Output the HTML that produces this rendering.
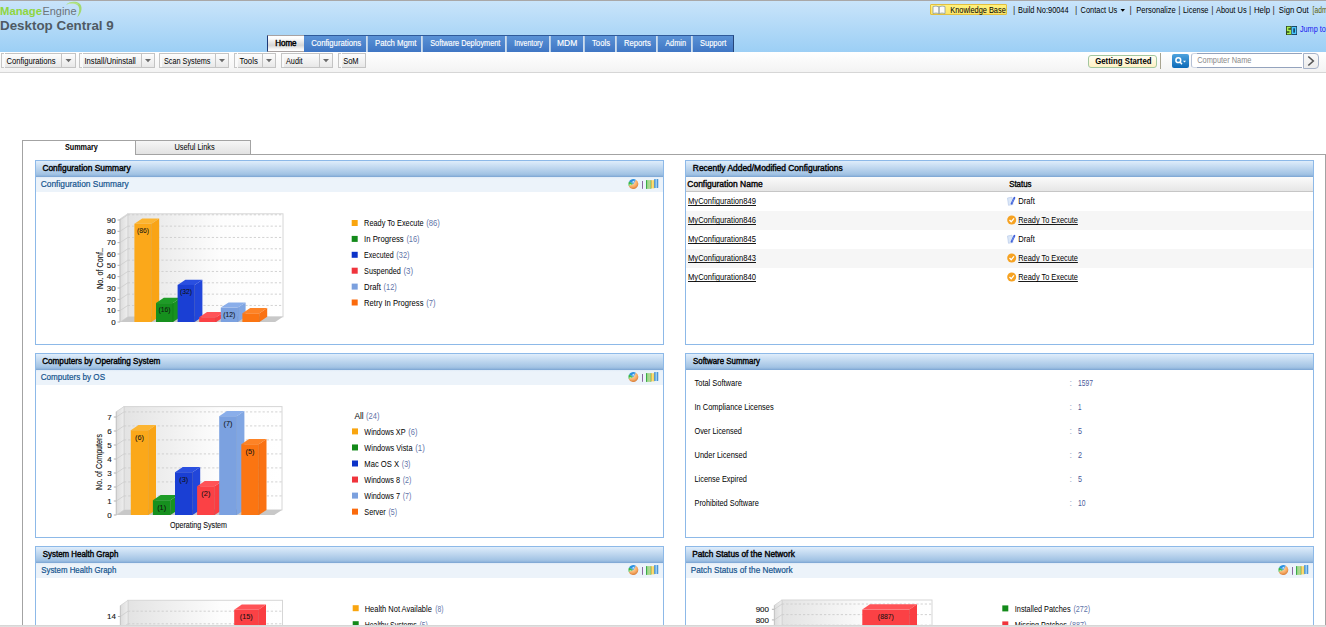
<!DOCTYPE html>
<html><head><meta charset="utf-8">
<style>
*{box-sizing:border-box;margin:0;padding:0}
html,body{width:1326px;height:627px;overflow:hidden;background:#fff;font-family:"Liberation Sans",sans-serif;font-size:8px;color:#000}
.abs{position:absolute}
#hdr{position:absolute;left:0;top:0;width:1326px;height:52px;background:linear-gradient(#c9e4fa,#9ccff5);border-top:1px solid #a9a7a7}
.tab{position:absolute;top:35px;height:17px;background:linear-gradient(#5a92d6,#3f76c4);border-top:1px solid #2f5a9a}
.tsep{position:absolute;top:36px;width:2px;height:16px;background:linear-gradient(90deg,#d8e6f4,#a8c2e0)}
#toolbar{position:absolute;left:0;top:52px;width:1326px;height:21px;background:linear-gradient(#ffffff,#f3f3f3);border-bottom:1px solid #d6d6d6}
.grip{position:absolute;top:53px;width:3px;height:15px;border:1px solid #c6c6c6;border-right:none;background:#fafafa}
.btn{position:absolute;top:53px;height:15px;border:1px solid #c4c4c4;border-left:none;background:linear-gradient(#fdfdfd,#e8e8e8)}
.dd{position:absolute;top:-1px;height:15px;border-left:1px solid #c4c4c4}
.dd:after{content:"";position:absolute;left:4px;top:5px;border-left:3px solid transparent;border-right:3px solid transparent;border-top:3px solid #666}
.panel{position:absolute;border:1px solid #8db9e8;background:#fff}
.ph{position:absolute;left:0;top:0;right:0;height:16px;background:linear-gradient(#dfedfb,#a2c3e4 88%,#8db2da);border-bottom:1px solid #82aad6}
.psh{position:absolute;left:0;top:16px;right:0;height:15px;background:linear-gradient(#e0ebf7,#ecf3fa 12%,#ecf3fa)}
.lsq{position:absolute;width:6px;height:6px}
</style></head><body>
<div id="hdr"></div>
<!-- logo swoosh -->
<svg class="abs" style="left:60px;top:0" width="26" height="20"><path d="M6 4.8 C9 1.8 15 0.8 19 3.2 C22.8 5.6 22.5 12.5 17.2 17.2 C19.6 12.2 20.2 6.8 17 4.8 C14 3 9.5 3.2 6 4.8 Z" fill="#9ed860" opacity="0.9"/><path d="M8 4 C12 2.4 16 2.6 18.4 4.4" fill="none" stroke="#d8f4b0" stroke-width="0.6" opacity="0.8"/></svg>
<!-- knowledge base box -->
<div class="abs" style="left:930px;top:4px;width:77px;height:11px;background:linear-gradient(#fff27e,#fbe46a);border:1px solid #e3bf3e;border-radius:1px"></div>
<svg class="abs" style="left:932px;top:5px" width="15" height="10"><path d="M1 1.5 Q4 0.5 7 1.8 L7 8.5 Q4 7.5 1 8.5 Z M7 1.8 Q10 0.5 13 1.5 L13 8.5 Q10 7.5 7 8.5 Z" fill="#fafafa" stroke="#8a9aa0" stroke-width="0.8"/></svg>
<!-- jump to icon -->
<svg class="abs" style="left:1286px;top:26px" width="11" height="9"><rect x="0" y="0" width="5.5" height="9" fill="#2d4a1c"/><rect x="5.5" y="0" width="5.5" height="9" fill="#173a58"/><path d="M4.6 1.6 H1.6 V4.5 H4.2 V7.4 H1" fill="none" stroke="#a8f050" stroke-width="1.5"/><rect x="6.6" y="1.6" width="3" height="5.8" fill="none" stroke="#48c8ff" stroke-width="1.4"/></svg>
<!-- nav tabs -->
<div class="abs" style="left:267px;top:35px;width:37px;height:17px;background:linear-gradient(#ffffff 0%,#fdfdfd 15%,#d6d6d6 62%,#f4f4f4 85%,#ffffff 100%);border-left:1px solid #1d3a78;border-top:1px solid #a8a2a2;border-bottom:1px solid #a8a2a2"></div>
<div class="tab" style="left:304px;width:430px;border-right:1px solid #25457a"></div>
<div class="tsep" style="left:366px"></div>
<div class="tsep" style="left:421px"></div>
<div class="tsep" style="left:505px"></div>
<div class="tsep" style="left:549px"></div>
<div class="tsep" style="left:583px"></div>
<div class="tsep" style="left:615px"></div>
<div class="tsep" style="left:656px"></div>
<div class="tsep" style="left:691px"></div>
<!-- toolbar -->
<div id="toolbar"></div>
<div class="grip" style="left:1px"></div>
<div class="btn" style="left:5px;width:71px"></div>
<div class="abs" style="left:61px;top:53px;width:1px;height:15px;background:#c4c4c4"></div>
<svg class="abs" style="left:61px;top:53px" width="14" height="15"><path d="M4.5 6 L10.5 6 L7.5 9.3 Z" fill="#6a6a6a"/></svg>
<div class="grip" style="left:79px"></div>
<div class="btn" style="left:83px;width:72px"></div>
<div class="abs" style="left:141px;top:53px;width:1px;height:15px;background:#c4c4c4"></div>
<svg class="abs" style="left:141px;top:53px" width="13" height="15"><path d="M4.0 6 L10.0 6 L7.0 9.3 Z" fill="#6a6a6a"/></svg>
<div class="grip" style="left:159px"></div>
<div class="btn" style="left:162px;width:67px"></div>
<div class="abs" style="left:215px;top:53px;width:1px;height:15px;background:#c4c4c4"></div>
<svg class="abs" style="left:215px;top:53px" width="13" height="15"><path d="M4.0 6 L10.0 6 L7.0 9.3 Z" fill="#6a6a6a"/></svg>
<div class="grip" style="left:234px"></div>
<div class="btn" style="left:238px;width:38px"></div>
<div class="abs" style="left:262px;top:53px;width:1px;height:15px;background:#c4c4c4"></div>
<svg class="abs" style="left:262px;top:53px" width="13" height="15"><path d="M4.0 6 L10.0 6 L7.0 9.3 Z" fill="#6a6a6a"/></svg>
<div class="grip" style="left:281px"></div>
<div class="btn" style="left:284px;width:49px"></div>
<div class="abs" style="left:319px;top:53px;width:1px;height:15px;background:#c4c4c4"></div>
<svg class="abs" style="left:319px;top:53px" width="13" height="15"><path d="M4.0 6 L10.0 6 L7.0 9.3 Z" fill="#6a6a6a"/></svg>
<div class="grip" style="left:338px"></div>
<div class="btn" style="left:342px;width:24px"></div>
<!-- right toolbar -->
<div class="abs" style="left:1088px;top:55px;width:69px;height:13px;border:1px solid #a3c7a0;border-radius:3px;background:linear-gradient(#fffdf2,#fff1c4)"></div>
<div class="abs" style="left:1160px;top:53px;width:1px;height:16px;background:#a8a490"></div>
<div class="abs" style="left:1172px;top:54px;width:17px;height:14px;border-radius:2px;background:linear-gradient(#4ea3de,#0b69b7)"></div>
<svg class="abs" style="left:1172px;top:54px" width="17" height="14"><circle cx="6.3" cy="6.2" r="2.4" fill="none" stroke="#fff" stroke-width="1.5"/><line x1="8" y1="8" x2="10" y2="10.3" stroke="#fff" stroke-width="1.5"/><path d="M11 6.8 L14 6.8 L12.5 8.5 Z" fill="#fff"/></svg>
<div class="abs" style="left:1192px;top:53px;width:111px;height:15px;background:#fff"></div><div class="abs" style="left:1191px;top:53px;width:6px;height:15px;border-top:1px solid #d0d8e4;border-bottom:1px solid #d0d8e4;border-left:1px solid #b4c0d4;border-radius:3px 0 0 3px"></div><div class="abs" style="left:1197px;top:53px;width:105px;height:1px;background:#94a3bd"></div><div class="abs" style="left:1197px;top:67px;width:105px;height:1px;background:#94a3bd"></div>
<div class="abs" style="left:1303px;top:53px;width:16px;height:16px;background:linear-gradient(#fafafa,#ececec);border:1px solid #a6b2c8;border-radius:0 4px 4px 0"></div>
<svg class="abs" style="left:1303px;top:53px" width="16" height="16"><path d="M5.3 3.5 L10.3 8 L5.3 12.5" fill="none" stroke="#555" stroke-width="1.6"/></svg>
<!-- sub tabs -->
<div class="abs" style="left:22px;top:140px;width:1304px;height:500px;border-left:1px solid #a3a3a3;border-top:1px solid #a3a3a3;border-right:1px solid #a3a3a3"></div>
<div class="abs" style="left:23px;top:141px;width:112px;height:14px;background:#fff"></div>
<div class="abs" style="left:135px;top:140px;width:116px;height:15px;background:linear-gradient(#f6f6f6,#e2e2e2);border:1px solid #a3a3a3"></div>
<div class="abs" style="left:251px;top:140px;width:1075px;height:14px;background:#fff"></div>
<div class="abs" style="left:251px;top:154px;width:1074px;height:1px;background:#a3a3a3"></div>
<!-- panels -->
<div class="panel" style="left:35px;top:160px;width:629px;height:185px"><div class="ph"></div><div class="psh"></div></div>
<div class="panel" style="left:685px;top:160px;width:629px;height:185px"><div class="ph"></div>
  <div class="abs" style="left:0;top:16px;width:627px;height:15px;background:linear-gradient(#fbfbfb,#e6e6e6);border-bottom:1px solid #c6c6c6"></div>
  <div class="abs" style="left:0;top:50px;width:627px;height:19px;background:#f6f6f6"></div>
  <div class="abs" style="left:0;top:88px;width:627px;height:19px;background:#f6f6f6"></div>
</div>
<div class="panel" style="left:35px;top:353px;width:629px;height:185px"><div class="ph"></div><div class="psh"></div></div>
<div class="panel" style="left:685px;top:353px;width:629px;height:185px"><div class="ph"></div></div>
<div class="panel" style="left:35px;top:546px;width:629px;height:185px"><div class="ph"></div><div class="psh"></div></div>
<div class="panel" style="left:685px;top:546px;width:629px;height:185px"><div class="ph"></div><div class="psh"></div></div>
<svg class="abs" style="left:627px;top:178px" width="34" height="13"><defs><radialGradient id="po" cx="0.4" cy="0.3" r="0.8"><stop offset="0" stop-color="#ffe0b8"/><stop offset="0.6" stop-color="#f6a860"/><stop offset="1" stop-color="#c86a28"/></radialGradient><linearGradient id="gg" x1="0" x2="1"><stop offset="0" stop-color="#0a9a2a"/><stop offset="0.3" stop-color="#a0d488"/><stop offset="0.8" stop-color="#b0dc98"/><stop offset="1" stop-color="#58b050"/></linearGradient><linearGradient id="gy" x1="0" x2="1"><stop offset="0" stop-color="#d8a020"/><stop offset="0.5" stop-color="#ffec90"/><stop offset="1" stop-color="#f0c020"/></linearGradient><linearGradient id="gb" x1="0" x2="1"><stop offset="0" stop-color="#1a70c8"/><stop offset="0.5" stop-color="#a8dcfa"/><stop offset="1" stop-color="#1a6cc0"/></linearGradient></defs><path d="M6.3 6 L8.80 1.67 A5 5 0 1 1 1.60 7.71 Z" fill="url(#po)"/><path d="M6.3 6 L1.60 7.71 A5 5 0 0 1 2.06 3.35 Z" fill="#3cb848"/><path d="M6.3 6 L2.06 3.35 A5 5 0 0 1 8.80 1.67 Z" fill="#2a90e0"/><path d="M4.5 4.2 L7.5 2.2 L7 4.8 Z" fill="#d8f0ff" opacity="0.9"/><path d="M2 6.5 L4.8 5.6 L3.2 8 Z" fill="#c0f0a0" opacity="0.9"/><rect x="15" y="3" width="1" height="7.8" fill="#8a6aa0"/><rect x="19" y="2.1" width="5.2" height="8.8" fill="url(#gg)"/><rect x="24.2" y="2.2" width="3.2" height="8.2" fill="url(#gy)"/><rect x="27.3" y="1" width="3.9" height="9" fill="url(#gb)" rx="0.5"/></svg><svg class="abs" style="left:627px;top:371px" width="34" height="13"><defs><radialGradient id="po" cx="0.4" cy="0.3" r="0.8"><stop offset="0" stop-color="#ffe0b8"/><stop offset="0.6" stop-color="#f6a860"/><stop offset="1" stop-color="#c86a28"/></radialGradient><linearGradient id="gg" x1="0" x2="1"><stop offset="0" stop-color="#0a9a2a"/><stop offset="0.3" stop-color="#a0d488"/><stop offset="0.8" stop-color="#b0dc98"/><stop offset="1" stop-color="#58b050"/></linearGradient><linearGradient id="gy" x1="0" x2="1"><stop offset="0" stop-color="#d8a020"/><stop offset="0.5" stop-color="#ffec90"/><stop offset="1" stop-color="#f0c020"/></linearGradient><linearGradient id="gb" x1="0" x2="1"><stop offset="0" stop-color="#1a70c8"/><stop offset="0.5" stop-color="#a8dcfa"/><stop offset="1" stop-color="#1a6cc0"/></linearGradient></defs><path d="M6.3 6 L8.80 1.67 A5 5 0 1 1 1.60 7.71 Z" fill="url(#po)"/><path d="M6.3 6 L1.60 7.71 A5 5 0 0 1 2.06 3.35 Z" fill="#3cb848"/><path d="M6.3 6 L2.06 3.35 A5 5 0 0 1 8.80 1.67 Z" fill="#2a90e0"/><path d="M4.5 4.2 L7.5 2.2 L7 4.8 Z" fill="#d8f0ff" opacity="0.9"/><path d="M2 6.5 L4.8 5.6 L3.2 8 Z" fill="#c0f0a0" opacity="0.9"/><rect x="15" y="3" width="1" height="7.8" fill="#8a6aa0"/><rect x="19" y="2.1" width="5.2" height="8.8" fill="url(#gg)"/><rect x="24.2" y="2.2" width="3.2" height="8.2" fill="url(#gy)"/><rect x="27.3" y="1" width="3.9" height="9" fill="url(#gb)" rx="0.5"/></svg><svg class="abs" style="left:627px;top:564px" width="34" height="13"><defs><radialGradient id="po" cx="0.4" cy="0.3" r="0.8"><stop offset="0" stop-color="#ffe0b8"/><stop offset="0.6" stop-color="#f6a860"/><stop offset="1" stop-color="#c86a28"/></radialGradient><linearGradient id="gg" x1="0" x2="1"><stop offset="0" stop-color="#0a9a2a"/><stop offset="0.3" stop-color="#a0d488"/><stop offset="0.8" stop-color="#b0dc98"/><stop offset="1" stop-color="#58b050"/></linearGradient><linearGradient id="gy" x1="0" x2="1"><stop offset="0" stop-color="#d8a020"/><stop offset="0.5" stop-color="#ffec90"/><stop offset="1" stop-color="#f0c020"/></linearGradient><linearGradient id="gb" x1="0" x2="1"><stop offset="0" stop-color="#1a70c8"/><stop offset="0.5" stop-color="#a8dcfa"/><stop offset="1" stop-color="#1a6cc0"/></linearGradient></defs><path d="M6.3 6 L8.80 1.67 A5 5 0 1 1 1.60 7.71 Z" fill="url(#po)"/><path d="M6.3 6 L1.60 7.71 A5 5 0 0 1 2.06 3.35 Z" fill="#3cb848"/><path d="M6.3 6 L2.06 3.35 A5 5 0 0 1 8.80 1.67 Z" fill="#2a90e0"/><path d="M4.5 4.2 L7.5 2.2 L7 4.8 Z" fill="#d8f0ff" opacity="0.9"/><path d="M2 6.5 L4.8 5.6 L3.2 8 Z" fill="#c0f0a0" opacity="0.9"/><rect x="15" y="3" width="1" height="7.8" fill="#8a6aa0"/><rect x="19" y="2.1" width="5.2" height="8.8" fill="url(#gg)"/><rect x="24.2" y="2.2" width="3.2" height="8.2" fill="url(#gy)"/><rect x="27.3" y="1" width="3.9" height="9" fill="url(#gb)" rx="0.5"/></svg><svg class="abs" style="left:1277px;top:564px" width="34" height="13"><defs><radialGradient id="po" cx="0.4" cy="0.3" r="0.8"><stop offset="0" stop-color="#ffe0b8"/><stop offset="0.6" stop-color="#f6a860"/><stop offset="1" stop-color="#c86a28"/></radialGradient><linearGradient id="gg" x1="0" x2="1"><stop offset="0" stop-color="#0a9a2a"/><stop offset="0.3" stop-color="#a0d488"/><stop offset="0.8" stop-color="#b0dc98"/><stop offset="1" stop-color="#58b050"/></linearGradient><linearGradient id="gy" x1="0" x2="1"><stop offset="0" stop-color="#d8a020"/><stop offset="0.5" stop-color="#ffec90"/><stop offset="1" stop-color="#f0c020"/></linearGradient><linearGradient id="gb" x1="0" x2="1"><stop offset="0" stop-color="#1a70c8"/><stop offset="0.5" stop-color="#a8dcfa"/><stop offset="1" stop-color="#1a6cc0"/></linearGradient></defs><path d="M6.3 6 L8.80 1.67 A5 5 0 1 1 1.60 7.71 Z" fill="url(#po)"/><path d="M6.3 6 L1.60 7.71 A5 5 0 0 1 2.06 3.35 Z" fill="#3cb848"/><path d="M6.3 6 L2.06 3.35 A5 5 0 0 1 8.80 1.67 Z" fill="#2a90e0"/><path d="M4.5 4.2 L7.5 2.2 L7 4.8 Z" fill="#d8f0ff" opacity="0.9"/><path d="M2 6.5 L4.8 5.6 L3.2 8 Z" fill="#c0f0a0" opacity="0.9"/><rect x="15" y="3" width="1" height="7.8" fill="#8a6aa0"/><rect x="19" y="2.1" width="5.2" height="8.8" fill="url(#gg)"/><rect x="24.2" y="2.2" width="3.2" height="8.2" fill="url(#gy)"/><rect x="27.3" y="1" width="3.9" height="9" fill="url(#gb)" rx="0.5"/></svg><svg class="abs" style="left:1007px;top:196.3px" width="9" height="10"><path d="M0.5 2 L5 1.2 L6 8.5 L1.5 9.3 Z" fill="#dce8f8" stroke="#b0c4e8" stroke-width="0.6"/><path d="M4.6 7.6 L7.4 1.8" stroke="#3a5ad8" stroke-width="1.9" stroke-linecap="round"/><path d="M4.8 7.2 L7 2.6" stroke="#8aa8f0" stroke-width="0.6"/></svg><svg class="abs" style="left:1007px;top:214.8px" width="10" height="10"><circle cx="4.7" cy="5" r="4.5" fill="#f6a221"/><path d="M2.5 5 L4.2 6.8 L7 3.4" fill="none" stroke="#fff" stroke-width="1.3"/></svg><svg class="abs" style="left:1007px;top:234.3px" width="9" height="10"><path d="M0.5 2 L5 1.2 L6 8.5 L1.5 9.3 Z" fill="#dce8f8" stroke="#b0c4e8" stroke-width="0.6"/><path d="M4.6 7.6 L7.4 1.8" stroke="#3a5ad8" stroke-width="1.9" stroke-linecap="round"/><path d="M4.8 7.2 L7 2.6" stroke="#8aa8f0" stroke-width="0.6"/></svg><svg class="abs" style="left:1007px;top:252.8px" width="10" height="10"><circle cx="4.7" cy="5" r="4.5" fill="#f6a221"/><path d="M2.5 5 L4.2 6.8 L7 3.4" fill="none" stroke="#fff" stroke-width="1.3"/></svg><svg class="abs" style="left:1007px;top:271.8px" width="10" height="10"><circle cx="4.7" cy="5" r="4.5" fill="#f6a221"/><path d="M2.5 5 L4.2 6.8 L7 3.4" fill="none" stroke="#fff" stroke-width="1.3"/></svg>
<svg class="abs" style="left:0;top:0" width="1326" height="627" font-family="Liberation Sans, sans-serif"><defs><linearGradient id="bw1" x1="0" x2="1" y1="0" y2="0"><stop offset="0" stop-color="#e3e3e3"/><stop offset="0.6" stop-color="#fdfdfd"/><stop offset="1" stop-color="#ffffff"/></linearGradient><linearGradient id="lw1" x1="0" x2="1" y1="0" y2="0"><stop offset="0" stop-color="#dcdcdc"/><stop offset="1" stop-color="#eeeeee"/></linearGradient></defs><rect x="127.8" y="213.8" width="155.2" height="103.0" fill="url(#bw1)" stroke="#d6d6d6" stroke-width="1"/><polygon points="120,219 127.8,213.8 127.8,316.8 120,322" fill="url(#lw1)" stroke="#d2d2d2" stroke-width="0.8"/><polygon points="120,322 127.8,316.8 283,316.8 275.2,322" fill="#c8c8c8"/><line x1="117.5" y1="322.0" x2="120" y2="322.0" stroke="#a0a0a0" stroke-width="0.8"/><text x="115.6" y="324.7" text-anchor="end" font-size="8" fill="#151515" stroke="#151515" stroke-width="0.12">0</text><line x1="127.8" y1="305.4666666666667" x2="283" y2="305.4666666666667" stroke="#cdcdcd" stroke-width="0.9" stroke-dasharray="2.2,2"/><line x1="120" y1="310.6666666666667" x2="127.8" y2="305.4666666666667" stroke="#cccccc" stroke-width="0.8"/><line x1="117.5" y1="310.6666666666667" x2="120" y2="310.6666666666667" stroke="#a0a0a0" stroke-width="0.8"/><text x="115.6" y="313.3666666666667" text-anchor="end" font-size="8" fill="#151515" stroke="#151515" stroke-width="0.12">10</text><line x1="127.8" y1="294.1333333333333" x2="283" y2="294.1333333333333" stroke="#cdcdcd" stroke-width="0.9" stroke-dasharray="2.2,2"/><line x1="120" y1="299.3333333333333" x2="127.8" y2="294.1333333333333" stroke="#cccccc" stroke-width="0.8"/><line x1="117.5" y1="299.3333333333333" x2="120" y2="299.3333333333333" stroke="#a0a0a0" stroke-width="0.8"/><text x="115.6" y="302.0333333333333" text-anchor="end" font-size="8" fill="#151515" stroke="#151515" stroke-width="0.12">20</text><line x1="127.8" y1="282.8" x2="283" y2="282.8" stroke="#cdcdcd" stroke-width="0.9" stroke-dasharray="2.2,2"/><line x1="120" y1="288.0" x2="127.8" y2="282.8" stroke="#cccccc" stroke-width="0.8"/><line x1="117.5" y1="288.0" x2="120" y2="288.0" stroke="#a0a0a0" stroke-width="0.8"/><text x="115.6" y="290.7" text-anchor="end" font-size="8" fill="#151515" stroke="#151515" stroke-width="0.12">30</text><line x1="127.8" y1="271.4666666666667" x2="283" y2="271.4666666666667" stroke="#cdcdcd" stroke-width="0.9" stroke-dasharray="2.2,2"/><line x1="120" y1="276.6666666666667" x2="127.8" y2="271.4666666666667" stroke="#cccccc" stroke-width="0.8"/><line x1="117.5" y1="276.6666666666667" x2="120" y2="276.6666666666667" stroke="#a0a0a0" stroke-width="0.8"/><text x="115.6" y="279.3666666666667" text-anchor="end" font-size="8" fill="#151515" stroke="#151515" stroke-width="0.12">40</text><line x1="127.8" y1="260.1333333333333" x2="283" y2="260.1333333333333" stroke="#cdcdcd" stroke-width="0.9" stroke-dasharray="2.2,2"/><line x1="120" y1="265.3333333333333" x2="127.8" y2="260.1333333333333" stroke="#cccccc" stroke-width="0.8"/><line x1="117.5" y1="265.3333333333333" x2="120" y2="265.3333333333333" stroke="#a0a0a0" stroke-width="0.8"/><text x="115.6" y="268.0333333333333" text-anchor="end" font-size="8" fill="#151515" stroke="#151515" stroke-width="0.12">50</text><line x1="127.8" y1="248.8" x2="283" y2="248.8" stroke="#cdcdcd" stroke-width="0.9" stroke-dasharray="2.2,2"/><line x1="120" y1="254.0" x2="127.8" y2="248.8" stroke="#cccccc" stroke-width="0.8"/><line x1="117.5" y1="254.0" x2="120" y2="254.0" stroke="#a0a0a0" stroke-width="0.8"/><text x="115.6" y="256.7" text-anchor="end" font-size="8" fill="#151515" stroke="#151515" stroke-width="0.12">60</text><line x1="127.8" y1="237.4666666666667" x2="283" y2="237.4666666666667" stroke="#cdcdcd" stroke-width="0.9" stroke-dasharray="2.2,2"/><line x1="120" y1="242.66666666666669" x2="127.8" y2="237.4666666666667" stroke="#cccccc" stroke-width="0.8"/><line x1="117.5" y1="242.66666666666669" x2="120" y2="242.66666666666669" stroke="#a0a0a0" stroke-width="0.8"/><text x="115.6" y="245.36666666666667" text-anchor="end" font-size="8" fill="#151515" stroke="#151515" stroke-width="0.12">70</text><line x1="127.8" y1="226.13333333333335" x2="283" y2="226.13333333333335" stroke="#cdcdcd" stroke-width="0.9" stroke-dasharray="2.2,2"/><line x1="120" y1="231.33333333333334" x2="127.8" y2="226.13333333333335" stroke="#cccccc" stroke-width="0.8"/><line x1="117.5" y1="231.33333333333334" x2="120" y2="231.33333333333334" stroke="#a0a0a0" stroke-width="0.8"/><text x="115.6" y="234.03333333333333" text-anchor="end" font-size="8" fill="#151515" stroke="#151515" stroke-width="0.12">80</text><line x1="127.8" y1="214.8" x2="283" y2="214.8" stroke="#cdcdcd" stroke-width="0.9" stroke-dasharray="2.2,2"/><line x1="120" y1="220.0" x2="127.8" y2="214.8" stroke="#cccccc" stroke-width="0.8"/><line x1="117.5" y1="220.0" x2="120" y2="220.0" stroke="#a0a0a0" stroke-width="0.8"/><text x="115.6" y="222.7" text-anchor="end" font-size="8" fill="#151515" stroke="#151515" stroke-width="0.12">90</text><line x1="120" y1="219" x2="120" y2="322" stroke="#c0c0c0" stroke-width="0.8"/><polygon points="134.4,223.73333333333332 142.20000000000002,218.53333333333333 159.20000000000002,218.53333333333333 151.4,223.73333333333332" fill="#fcb532"/><polygon points="151.4,223.73333333333332 159.20000000000002,218.53333333333333 159.20000000000002,316.8 151.4,322" fill="#f9a415"/><rect x="134.4" y="223.73333333333332" width="17" height="98.26666666666668" fill="#fba81a"/><line x1="151.4" y1="223.73333333333332" x2="151.4" y2="322" stroke="#d88a08" stroke-width="0.6" opacity="0.6"/><text x="142.9" y="233.03333333333333" text-anchor="middle" font-size="7.6" fill="#111" stroke="#111" stroke-width="0.05" textLength="12" lengthAdjust="spacingAndGlyphs">(86)</text><polygon points="156.0,303.06666666666666 163.8,297.8666666666667 180.8,297.8666666666667 173.0,303.06666666666666" fill="#1e9c27"/><polygon points="173.0,303.06666666666666 180.8,297.8666666666667 180.8,316.8 173.0,322" fill="#18931f"/><rect x="156.0" y="303.06666666666666" width="17" height="18.933333333333337" fill="#16901e"/><line x1="173.0" y1="303.06666666666666" x2="173.0" y2="322" stroke="#0b6a12" stroke-width="0.6" opacity="0.6"/><text x="164.5" y="312.3666666666667" text-anchor="middle" font-size="7.6" fill="#111" stroke="#111" stroke-width="0.05" textLength="12" lengthAdjust="spacingAndGlyphs">(16)</text><polygon points="177.60000000000002,284.93333333333334 185.40000000000003,279.73333333333335 202.40000000000003,279.73333333333335 194.60000000000002,284.93333333333334" fill="#2a4fe0"/><polygon points="194.60000000000002,284.93333333333334 202.40000000000003,279.73333333333335 202.40000000000003,316.8 194.60000000000002,322" fill="#2146da"/><rect x="177.60000000000002" y="284.93333333333334" width="17" height="37.06666666666666" fill="#1a3fd4"/><line x1="194.60000000000002" y1="284.93333333333334" x2="194.60000000000002" y2="322" stroke="#102aa0" stroke-width="0.6" opacity="0.6"/><text x="186.10000000000002" y="294.23333333333335" text-anchor="middle" font-size="7.6" fill="#111" stroke="#111" stroke-width="0.05" textLength="12" lengthAdjust="spacingAndGlyphs">(32)</text><polygon points="199.20000000000002,317.23333333333335 207.00000000000003,312.03333333333336 224.00000000000003,312.03333333333336 216.20000000000002,317.23333333333335" fill="#ff5357"/><polygon points="216.20000000000002,317.23333333333335 224.00000000000003,312.03333333333336 224.00000000000003,316.8 216.20000000000002,322" fill="#fa3d41"/><rect x="199.20000000000002" y="317.23333333333335" width="17" height="4.7666666666666515" fill="#fb4145"/><line x1="216.20000000000002" y1="317.23333333333335" x2="216.20000000000002" y2="322" stroke="#c82025" stroke-width="0.6" opacity="0.6"/><polygon points="220.8,307.59999999999997 228.60000000000002,302.4 245.60000000000002,302.4 237.8,307.59999999999997" fill="#8aaeea"/><polygon points="237.8,307.59999999999997 245.60000000000002,302.4 245.60000000000002,316.8 237.8,322" fill="#80a6e3"/><rect x="220.8" y="307.59999999999997" width="17" height="14.400000000000034" fill="#7ba1e0"/><line x1="237.8" y1="307.59999999999997" x2="237.8" y2="322" stroke="#5a80c0" stroke-width="0.6" opacity="0.6"/><text x="229.3" y="316.9" text-anchor="middle" font-size="7.6" fill="#111" stroke="#111" stroke-width="0.05" textLength="12" lengthAdjust="spacingAndGlyphs">(12)</text><polygon points="242.4,313.26666666666665 250.20000000000002,308.06666666666666 267.2,308.06666666666666 259.4,313.26666666666665" fill="#fd8326"/><polygon points="259.4,313.26666666666665 267.2,308.06666666666666 267.2,316.8 259.4,322" fill="#fa7213"/><rect x="242.4" y="313.26666666666665" width="17" height="8.733333333333348" fill="#fb7512"/><line x1="259.4" y1="313.26666666666665" x2="259.4" y2="322" stroke="#c85a05" stroke-width="0.6" opacity="0.6"/><text x="102.5" y="268.5" text-anchor="middle" font-size="8.4" fill="#111" stroke="#111" stroke-width="0.12" transform="rotate(-90 102.5 268.5)" textLength="41" lengthAdjust="spacingAndGlyphs">No. of Conf..</text><defs><linearGradient id="bw2" x1="0" x2="1" y1="0" y2="0"><stop offset="0" stop-color="#e3e3e3"/><stop offset="0.6" stop-color="#fdfdfd"/><stop offset="1" stop-color="#ffffff"/></linearGradient><linearGradient id="lw2" x1="0" x2="1" y1="0" y2="0"><stop offset="0" stop-color="#dcdcdc"/><stop offset="1" stop-color="#eeeeee"/></linearGradient></defs><rect x="124.0" y="406.59999999999997" width="158.0" height="103.30000000000001" fill="url(#bw2)" stroke="#d6d6d6" stroke-width="1"/><polygon points="116.3,411.7 124.0,406.59999999999997 124.0,509.9 116.3,515" fill="url(#lw2)" stroke="#d2d2d2" stroke-width="0.8"/><polygon points="116.3,515 124.0,509.9 282,509.9 274.3,515" fill="#c8c8c8"/><line x1="113.8" y1="515" x2="116.3" y2="515" stroke="#a0a0a0" stroke-width="0.8"/><text x="111.6" y="517.7" text-anchor="end" font-size="8" fill="#151515" stroke="#151515" stroke-width="0.12">0</text><line x1="124.0" y1="495.9" x2="282" y2="495.9" stroke="#cdcdcd" stroke-width="0.9" stroke-dasharray="2.2,2"/><line x1="116.3" y1="501" x2="124.0" y2="495.9" stroke="#cccccc" stroke-width="0.8"/><line x1="113.8" y1="501" x2="116.3" y2="501" stroke="#a0a0a0" stroke-width="0.8"/><text x="111.6" y="503.7" text-anchor="end" font-size="8" fill="#151515" stroke="#151515" stroke-width="0.12">1</text><line x1="124.0" y1="481.9" x2="282" y2="481.9" stroke="#cdcdcd" stroke-width="0.9" stroke-dasharray="2.2,2"/><line x1="116.3" y1="487" x2="124.0" y2="481.9" stroke="#cccccc" stroke-width="0.8"/><line x1="113.8" y1="487" x2="116.3" y2="487" stroke="#a0a0a0" stroke-width="0.8"/><text x="111.6" y="489.7" text-anchor="end" font-size="8" fill="#151515" stroke="#151515" stroke-width="0.12">2</text><line x1="124.0" y1="467.9" x2="282" y2="467.9" stroke="#cdcdcd" stroke-width="0.9" stroke-dasharray="2.2,2"/><line x1="116.3" y1="473" x2="124.0" y2="467.9" stroke="#cccccc" stroke-width="0.8"/><line x1="113.8" y1="473" x2="116.3" y2="473" stroke="#a0a0a0" stroke-width="0.8"/><text x="111.6" y="475.7" text-anchor="end" font-size="8" fill="#151515" stroke="#151515" stroke-width="0.12">3</text><line x1="124.0" y1="453.9" x2="282" y2="453.9" stroke="#cdcdcd" stroke-width="0.9" stroke-dasharray="2.2,2"/><line x1="116.3" y1="459" x2="124.0" y2="453.9" stroke="#cccccc" stroke-width="0.8"/><line x1="113.8" y1="459" x2="116.3" y2="459" stroke="#a0a0a0" stroke-width="0.8"/><text x="111.6" y="461.7" text-anchor="end" font-size="8" fill="#151515" stroke="#151515" stroke-width="0.12">4</text><line x1="124.0" y1="439.9" x2="282" y2="439.9" stroke="#cdcdcd" stroke-width="0.9" stroke-dasharray="2.2,2"/><line x1="116.3" y1="445" x2="124.0" y2="439.9" stroke="#cccccc" stroke-width="0.8"/><line x1="113.8" y1="445" x2="116.3" y2="445" stroke="#a0a0a0" stroke-width="0.8"/><text x="111.6" y="447.7" text-anchor="end" font-size="8" fill="#151515" stroke="#151515" stroke-width="0.12">5</text><line x1="124.0" y1="425.9" x2="282" y2="425.9" stroke="#cdcdcd" stroke-width="0.9" stroke-dasharray="2.2,2"/><line x1="116.3" y1="431" x2="124.0" y2="425.9" stroke="#cccccc" stroke-width="0.8"/><line x1="113.8" y1="431" x2="116.3" y2="431" stroke="#a0a0a0" stroke-width="0.8"/><text x="111.6" y="433.7" text-anchor="end" font-size="8" fill="#151515" stroke="#151515" stroke-width="0.12">6</text><line x1="124.0" y1="411.9" x2="282" y2="411.9" stroke="#cdcdcd" stroke-width="0.9" stroke-dasharray="2.2,2"/><line x1="116.3" y1="417" x2="124.0" y2="411.9" stroke="#cccccc" stroke-width="0.8"/><line x1="113.8" y1="417" x2="116.3" y2="417" stroke="#a0a0a0" stroke-width="0.8"/><text x="111.6" y="419.7" text-anchor="end" font-size="8" fill="#151515" stroke="#151515" stroke-width="0.12">7</text><line x1="116.3" y1="411.7" x2="116.3" y2="515" stroke="#c0c0c0" stroke-width="0.8"/><polygon points="130.8,430.2 138.5,425.09999999999997 156.0,425.09999999999997 148.3,430.2" fill="#fcb532"/><polygon points="148.3,430.2 156.0,425.09999999999997 156.0,509.9 148.3,515" fill="#f9a415"/><rect x="130.8" y="430.2" width="17.5" height="84.80000000000001" fill="#fba81a"/><line x1="148.3" y1="430.2" x2="148.3" y2="515" stroke="#d88a08" stroke-width="0.6" opacity="0.6"/><text x="139.55" y="439.5" text-anchor="middle" font-size="7.6" fill="#111" stroke="#111" stroke-width="0.05" textLength="9" lengthAdjust="spacingAndGlyphs">(6)</text><polygon points="152.9,500.2 160.6,495.09999999999997 178.1,495.09999999999997 170.4,500.2" fill="#1e9c27"/><polygon points="170.4,500.2 178.1,495.09999999999997 178.1,509.9 170.4,515" fill="#18931f"/><rect x="152.9" y="500.2" width="17.5" height="14.800000000000011" fill="#16901e"/><line x1="170.4" y1="500.2" x2="170.4" y2="515" stroke="#0b6a12" stroke-width="0.6" opacity="0.6"/><text x="161.65" y="509.5" text-anchor="middle" font-size="7.6" fill="#111" stroke="#111" stroke-width="0.05" textLength="9" lengthAdjust="spacingAndGlyphs">(1)</text><polygon points="175.0,472.2 182.7,467.09999999999997 200.2,467.09999999999997 192.5,472.2" fill="#2a4fe0"/><polygon points="192.5,472.2 200.2,467.09999999999997 200.2,509.9 192.5,515" fill="#2146da"/><rect x="175.0" y="472.2" width="17.5" height="42.80000000000001" fill="#1a3fd4"/><line x1="192.5" y1="472.2" x2="192.5" y2="515" stroke="#102aa0" stroke-width="0.6" opacity="0.6"/><text x="183.75" y="481.5" text-anchor="middle" font-size="7.6" fill="#111" stroke="#111" stroke-width="0.05" textLength="9" lengthAdjust="spacingAndGlyphs">(3)</text><polygon points="197.10000000000002,486.2 204.8,481.09999999999997 222.3,481.09999999999997 214.60000000000002,486.2" fill="#ff5357"/><polygon points="214.60000000000002,486.2 222.3,481.09999999999997 222.3,509.9 214.60000000000002,515" fill="#fa3d41"/><rect x="197.10000000000002" y="486.2" width="17.5" height="28.80000000000001" fill="#fb4145"/><line x1="214.60000000000002" y1="486.2" x2="214.60000000000002" y2="515" stroke="#c82025" stroke-width="0.6" opacity="0.6"/><text x="205.85000000000002" y="495.5" text-anchor="middle" font-size="7.6" fill="#111" stroke="#111" stroke-width="0.05" textLength="9" lengthAdjust="spacingAndGlyphs">(2)</text><polygon points="219.20000000000002,416.2 226.9,411.09999999999997 244.4,411.09999999999997 236.70000000000002,416.2" fill="#8aaeea"/><polygon points="236.70000000000002,416.2 244.4,411.09999999999997 244.4,509.9 236.70000000000002,515" fill="#80a6e3"/><rect x="219.20000000000002" y="416.2" width="17.5" height="98.80000000000001" fill="#7ba1e0"/><line x1="236.70000000000002" y1="416.2" x2="236.70000000000002" y2="515" stroke="#5a80c0" stroke-width="0.6" opacity="0.6"/><text x="227.95000000000002" y="425.5" text-anchor="middle" font-size="7.6" fill="#111" stroke="#111" stroke-width="0.05" textLength="9" lengthAdjust="spacingAndGlyphs">(7)</text><polygon points="241.3,444.2 249.0,439.09999999999997 266.5,439.09999999999997 258.8,444.2" fill="#fd8326"/><polygon points="258.8,444.2 266.5,439.09999999999997 266.5,509.9 258.8,515" fill="#fa7213"/><rect x="241.3" y="444.2" width="17.5" height="70.80000000000001" fill="#fb7512"/><line x1="258.8" y1="444.2" x2="258.8" y2="515" stroke="#c85a05" stroke-width="0.6" opacity="0.6"/><text x="250.05" y="453.5" text-anchor="middle" font-size="7.6" fill="#111" stroke="#111" stroke-width="0.05" textLength="9" lengthAdjust="spacingAndGlyphs">(5)</text><text x="102" y="462" text-anchor="middle" font-size="8.4" fill="#111" stroke="#111" stroke-width="0.12" transform="rotate(-90 102 462)" textLength="56" lengthAdjust="spacingAndGlyphs">No. of Computers</text><text x="170" y="527.8" font-size="8.6" fill="#111" stroke="#111" stroke-width="0.1" textLength="57" lengthAdjust="spacingAndGlyphs">Operating System</text><defs><linearGradient id="bw3" x1="0" x2="1" y1="0" y2="0"><stop offset="0" stop-color="#e3e3e3"/><stop offset="0.6" stop-color="#fdfdfd"/><stop offset="1" stop-color="#ffffff"/></linearGradient><linearGradient id="lw3" x1="0" x2="1" y1="0" y2="0"><stop offset="0" stop-color="#dcdcdc"/><stop offset="1" stop-color="#eeeeee"/></linearGradient></defs><rect x="128.0" y="600.3000000000001" width="154.5" height="99.10000000000002" fill="url(#bw3)" stroke="#d6d6d6" stroke-width="1"/><polygon points="120.4,605.6 128.0,600.3000000000001 128.0,699.4000000000001 120.4,704.7" fill="url(#lw3)" stroke="#d2d2d2" stroke-width="0.8"/><polygon points="120.4,704.7 128.0,699.4000000000001 282.5,699.4000000000001 274.9,704.7" fill="#c8c8c8"/><line x1="128.0" y1="611.2" x2="282.5" y2="611.2" stroke="#cdcdcd" stroke-width="0.9" stroke-dasharray="2.2,2"/><line x1="120.4" y1="616.5" x2="128.0" y2="611.2" stroke="#cccccc" stroke-width="0.8"/><line x1="117.9" y1="616.5" x2="120.4" y2="616.5" stroke="#a0a0a0" stroke-width="0.8"/><text x="116" y="619.2" text-anchor="end" font-size="8" fill="#151515" stroke="#151515" stroke-width="0.12">14</text><line x1="128.0" y1="623.8000000000001" x2="282.5" y2="623.8000000000001" stroke="#cdcdcd" stroke-width="0.9" stroke-dasharray="2.2,2"/><line x1="120.4" y1="629.1" x2="128.0" y2="623.8000000000001" stroke="#cccccc" stroke-width="0.8"/><line x1="117.9" y1="629.1" x2="120.4" y2="629.1" stroke="#a0a0a0" stroke-width="0.8"/><text x="116" y="631.8000000000001" text-anchor="end" font-size="8" fill="#151515" stroke="#151515" stroke-width="0.12">12</text><line x1="128.0" y1="636.4000000000001" x2="282.5" y2="636.4000000000001" stroke="#cdcdcd" stroke-width="0.9" stroke-dasharray="2.2,2"/><line x1="120.4" y1="641.7" x2="128.0" y2="636.4000000000001" stroke="#cccccc" stroke-width="0.8"/><line x1="117.9" y1="641.7" x2="120.4" y2="641.7" stroke="#a0a0a0" stroke-width="0.8"/><text x="116" y="644.4000000000001" text-anchor="end" font-size="8" fill="#151515" stroke="#151515" stroke-width="0.12">10</text><line x1="120.4" y1="605.6" x2="120.4" y2="704.7" stroke="#c0c0c0" stroke-width="0.8"/><polygon points="234.2,609.8000000000001 241.79999999999998,604.5000000000001 266.0,604.5000000000001 258.4,609.8000000000001" fill="#ff5357"/><polygon points="258.4,609.8000000000001 266.0,604.5000000000001 266.0,699.4000000000001 258.4,704.7" fill="#fa3d41"/><rect x="234.2" y="609.8000000000001" width="24.2" height="94.89999999999998" fill="#fb4145"/><line x1="258.4" y1="609.8000000000001" x2="258.4" y2="704.7" stroke="#c82025" stroke-width="0.6" opacity="0.6"/><text x="246.29999999999998" y="619.1" text-anchor="middle" font-size="7.6" fill="#111" stroke="#111" stroke-width="0.05" textLength="13" lengthAdjust="spacingAndGlyphs">(15)</text><defs><linearGradient id="bw4" x1="0" x2="1" y1="0" y2="0"><stop offset="0" stop-color="#e3e3e3"/><stop offset="0.6" stop-color="#fdfdfd"/><stop offset="1" stop-color="#ffffff"/></linearGradient><linearGradient id="lw4" x1="0" x2="1" y1="0" y2="0"><stop offset="0" stop-color="#dcdcdc"/><stop offset="1" stop-color="#eeeeee"/></linearGradient></defs><rect x="782.0" y="600.0" width="150.0" height="99.40000000000009" fill="url(#bw4)" stroke="#d6d6d6" stroke-width="1"/><polygon points="774.4,605.3 782.0,600.0 782.0,699.4000000000001 774.4,704.7" fill="url(#lw4)" stroke="#d2d2d2" stroke-width="0.8"/><polygon points="774.4,704.7 782.0,699.4000000000001 932,699.4000000000001 924.4,704.7" fill="#c8c8c8"/><line x1="782.0" y1="604.0000000000001" x2="932" y2="604.0000000000001" stroke="#cdcdcd" stroke-width="0.9" stroke-dasharray="2.2,2"/><line x1="774.4" y1="609.3000000000001" x2="782.0" y2="604.0000000000001" stroke="#cccccc" stroke-width="0.8"/><line x1="771.9" y1="609.3000000000001" x2="774.4" y2="609.3000000000001" stroke="#a0a0a0" stroke-width="0.8"/><text x="769" y="612.0000000000001" text-anchor="end" font-size="8" fill="#151515" stroke="#151515" stroke-width="0.12">900</text><line x1="782.0" y1="614.6000000000001" x2="932" y2="614.6000000000001" stroke="#cdcdcd" stroke-width="0.9" stroke-dasharray="2.2,2"/><line x1="774.4" y1="619.9000000000001" x2="782.0" y2="614.6000000000001" stroke="#cccccc" stroke-width="0.8"/><line x1="771.9" y1="619.9000000000001" x2="774.4" y2="619.9000000000001" stroke="#a0a0a0" stroke-width="0.8"/><text x="769" y="622.6000000000001" text-anchor="end" font-size="8" fill="#151515" stroke="#151515" stroke-width="0.12">800</text><line x1="782.0" y1="625.2" x2="932" y2="625.2" stroke="#cdcdcd" stroke-width="0.9" stroke-dasharray="2.2,2"/><line x1="774.4" y1="630.5" x2="782.0" y2="625.2" stroke="#cccccc" stroke-width="0.8"/><line x1="771.9" y1="630.5" x2="774.4" y2="630.5" stroke="#a0a0a0" stroke-width="0.8"/><text x="769" y="633.2" text-anchor="end" font-size="8" fill="#151515" stroke="#151515" stroke-width="0.12">700</text><line x1="774.4" y1="605.3" x2="774.4" y2="704.7" stroke="#c0c0c0" stroke-width="0.8"/><polygon points="862.3,609.6 869.9,604.3000000000001 917.0,604.3000000000001 909.4,609.6" fill="#ff5357"/><polygon points="909.4,609.6 917.0,604.3000000000001 917.0,699.4000000000001 909.4,704.7" fill="#fa3d41"/><rect x="862.3" y="609.6" width="47.1" height="95.10000000000002" fill="#fb4145"/><line x1="909.4" y1="609.6" x2="909.4" y2="704.7" stroke="#c82025" stroke-width="0.6" opacity="0.6"/><text x="885.8499999999999" y="618.9" text-anchor="middle" font-size="7.6" fill="#111" stroke="#111" stroke-width="0.05" textLength="16" lengthAdjust="spacingAndGlyphs">(887)</text><text x="0" y="15" font-size="11.2" font-weight="bold" fill="#8fd540" textLength="42" lengthAdjust="spacingAndGlyphs">Manage</text><text x="42.5" y="15" font-size="11.5" fill="#6c737a" textLength="34" lengthAdjust="spacingAndGlyphs" stroke="#6c737a" stroke-width="0.0">Engine</text><text x="0" y="30" font-size="12.8" font-weight="bold" fill="#4f5a64" textLength="113.7" lengthAdjust="spacingAndGlyphs">Desktop Central 9</text><text x="950.3" y="12.8" font-size="8.8" fill="#000" textLength="55.5" lengthAdjust="spacingAndGlyphs" stroke="#000" stroke-width="0.0">Knowledge Base</text><text x="1013.0999999999999" y="13.3" font-size="8.8" fill="#333" stroke="#333" stroke-width="0.0">|</text><text x="1074.8999999999999" y="13.3" font-size="8.8" fill="#333" stroke="#333" stroke-width="0.0">|</text><text x="1129.3999999999999" y="13.3" font-size="8.8" fill="#333" stroke="#333" stroke-width="0.0">|</text><text x="1178.3" y="13.3" font-size="8.8" fill="#333" stroke="#333" stroke-width="0.0">|</text><text x="1211.2" y="13.3" font-size="8.8" fill="#333" stroke="#333" stroke-width="0.0">|</text><text x="1249.0" y="13.3" font-size="8.8" fill="#333" stroke="#333" stroke-width="0.0">|</text><text x="1272.6" y="13.3" font-size="8.8" fill="#333" stroke="#333" stroke-width="0.0">|</text><text x="1018" y="12.8" font-size="8.8" fill="#000" textLength="50.6" lengthAdjust="spacingAndGlyphs" stroke="#000" stroke-width="0.0">Build No:90044</text><text x="1080.6" y="12.8" font-size="8.8" fill="#000" textLength="36.7" lengthAdjust="spacingAndGlyphs" stroke="#000" stroke-width="0.0">Contact Us</text><path d="M1120.5 9 L1125 9 L1122.75 11.8 Z" fill="#000"/><text x="1136.3" y="12.8" font-size="8.8" fill="#000" textLength="39.3" lengthAdjust="spacingAndGlyphs" stroke="#000" stroke-width="0.0">Personalize</text><text x="1182.9" y="12.8" font-size="8.8" fill="#000" textLength="25.6" lengthAdjust="spacingAndGlyphs" stroke="#000" stroke-width="0.0">License</text><text x="1216" y="12.8" font-size="8.8" fill="#000" textLength="30.6" lengthAdjust="spacingAndGlyphs" stroke="#000" stroke-width="0.0">About Us</text><text x="1253.9" y="12.8" font-size="8.8" fill="#000" textLength="16.1" lengthAdjust="spacingAndGlyphs" stroke="#000" stroke-width="0.0">Help</text><text x="1278.8" y="12.8" font-size="8.8" fill="#000" textLength="29.9" lengthAdjust="spacingAndGlyphs" stroke="#000" stroke-width="0.0">Sign Out</text><text x="1312.6" y="12.8" font-size="8.8" fill="#5a5e08" textLength="22" lengthAdjust="spacingAndGlyphs" stroke="#5a5e08" stroke-width="0.0">[admin]</text><text x="1299.9" y="32" font-size="8.8" fill="#1818f0" textLength="26" lengthAdjust="spacingAndGlyphs" stroke="#1818f0" stroke-width="0.0">Jump to</text><text x="275.2" y="46.2" font-size="8.6" fill="#000" textLength="21.4" lengthAdjust="spacingAndGlyphs" stroke="#000" stroke-width="0.45">Home</text><text x="311.3" y="46.2" font-size="8.8" fill="#ffffff" textLength="49.8" lengthAdjust="spacingAndGlyphs" stroke="#ffffff" stroke-width="0.15">Configurations</text><text x="375" y="46.2" font-size="8.8" fill="#ffffff" textLength="41.4" lengthAdjust="spacingAndGlyphs" stroke="#ffffff" stroke-width="0.15">Patch Mgmt</text><text x="430.2" y="46.2" font-size="8.8" fill="#ffffff" textLength="70.2" lengthAdjust="spacingAndGlyphs" stroke="#ffffff" stroke-width="0.15">Software Deployment</text><text x="514.3" y="46.2" font-size="8.8" fill="#ffffff" textLength="28.5" lengthAdjust="spacingAndGlyphs" stroke="#ffffff" stroke-width="0.15">Inventory</text><text x="557" y="46.2" font-size="8.8" fill="#ffffff" textLength="20.2" lengthAdjust="spacingAndGlyphs" stroke="#ffffff" stroke-width="0.15">MDM</text><text x="592" y="46.2" font-size="8.8" fill="#ffffff" textLength="18" lengthAdjust="spacingAndGlyphs" stroke="#ffffff" stroke-width="0.15">Tools</text><text x="624" y="46.2" font-size="8.8" fill="#ffffff" textLength="26.8" lengthAdjust="spacingAndGlyphs" stroke="#ffffff" stroke-width="0.15">Reports</text><text x="665.2" y="46.2" font-size="8.8" fill="#ffffff" textLength="20.8" lengthAdjust="spacingAndGlyphs" stroke="#ffffff" stroke-width="0.15">Admin</text><text x="700" y="46.2" font-size="8.8" fill="#ffffff" textLength="26.3" lengthAdjust="spacingAndGlyphs" stroke="#ffffff" stroke-width="0.15">Support</text><text x="6.4" y="64" font-size="8.8" fill="#000" textLength="49.2" lengthAdjust="spacingAndGlyphs" stroke="#000" stroke-width="0.0">Configurations</text><text x="84.5" y="64" font-size="8.8" fill="#000" textLength="51.3" lengthAdjust="spacingAndGlyphs" stroke="#000" stroke-width="0.0">Install/Uninstall</text><text x="164" y="64" font-size="8.8" fill="#000" textLength="46.5" lengthAdjust="spacingAndGlyphs" stroke="#000" stroke-width="0.0">Scan Systems</text><text x="239.6" y="64" font-size="8.8" fill="#000" textLength="18.2" lengthAdjust="spacingAndGlyphs" stroke="#000" stroke-width="0.0">Tools</text><text x="286" y="64" font-size="8.8" fill="#000" textLength="16.6" lengthAdjust="spacingAndGlyphs" stroke="#000" stroke-width="0.0">Audit</text><text x="343.2" y="64" font-size="8.8" fill="#000" textLength="15.4" lengthAdjust="spacingAndGlyphs" stroke="#000" stroke-width="0.0">SoM</text><text x="1095.2" y="63.8" font-size="8.8" font-weight="bold" fill="#000" textLength="56.4" lengthAdjust="spacingAndGlyphs">Getting Started</text><text x="1197.2" y="63" font-size="8.8" fill="#8a8a8a" textLength="54.3" lengthAdjust="spacingAndGlyphs" stroke="#8a8a8a" stroke-width="0.0">Computer Name</text><text x="64.9" y="149.8" font-size="8.8" font-weight="bold" fill="#000" textLength="33" lengthAdjust="spacingAndGlyphs">Summary</text><text x="174.4" y="149.6" font-size="8.8" fill="#000" textLength="40.4" lengthAdjust="spacingAndGlyphs" stroke="#000" stroke-width="0.0">Useful Links</text><text x="42.4" y="171" font-size="8.4" fill="#000" textLength="88.2" lengthAdjust="spacingAndGlyphs" stroke="#000" stroke-width="0.38">Configuration Summary</text><text x="40.7" y="186.8" font-size="8.8" fill="#14538e" textLength="88" lengthAdjust="spacingAndGlyphs" stroke="#14538e" stroke-width="0.2">Configuration Summary</text><text x="692.8" y="171" font-size="8.4" fill="#000" textLength="149.8" lengthAdjust="spacingAndGlyphs" stroke="#000" stroke-width="0.38">Recently Added/Modified Configurations</text><text x="42.2" y="364.3" font-size="8.4" fill="#000" textLength="118" lengthAdjust="spacingAndGlyphs" stroke="#000" stroke-width="0.38">Computers by Operating System</text><text x="40.7" y="379.8" font-size="8.8" fill="#14538e" textLength="64.4" lengthAdjust="spacingAndGlyphs" stroke="#14538e" stroke-width="0.2">Computers by OS</text><text x="693" y="364.3" font-size="8.4" fill="#000" textLength="67" lengthAdjust="spacingAndGlyphs" stroke="#000" stroke-width="0.38">Software Summary</text><text x="42.8" y="557.3" font-size="8.4" fill="#000" textLength="75.5" lengthAdjust="spacingAndGlyphs" stroke="#000" stroke-width="0.38">System Health Graph</text><text x="41.3" y="572.8" font-size="8.8" fill="#14538e" textLength="75" lengthAdjust="spacingAndGlyphs" stroke="#14538e" stroke-width="0.2">System Health Graph</text><text x="692.2" y="557.3" font-size="8.4" fill="#000" textLength="102.6" lengthAdjust="spacingAndGlyphs" stroke="#000" stroke-width="0.38">Patch Status of the Network</text><text x="690.7" y="572.8" font-size="8.8" fill="#14538e" textLength="102" lengthAdjust="spacingAndGlyphs" stroke="#14538e" stroke-width="0.2">Patch Status of the Network</text><text x="687.3" y="186.9" font-size="8.4" fill="#000" textLength="75.4" lengthAdjust="spacingAndGlyphs" stroke="#000" stroke-width="0.36">Configuration Name</text><text x="1009.2" y="186.9" font-size="8.4" fill="#000" textLength="22.3" lengthAdjust="spacingAndGlyphs" stroke="#000" stroke-width="0.36">Status</text><text x="688" y="204" font-size="8.8" fill="#000" textLength="68" lengthAdjust="spacingAndGlyphs" stroke="#000" stroke-width="0.0">MyConfiguration849</text><rect x="688" y="205" width="68" height="0.9" fill="#000"/><text x="1018.3" y="204" font-size="8.8" fill="#000" textLength="16.5" lengthAdjust="spacingAndGlyphs" stroke="#000" stroke-width="0.0">Draft</text><text x="688" y="223" font-size="8.8" fill="#000" textLength="68" lengthAdjust="spacingAndGlyphs" stroke="#000" stroke-width="0.0">MyConfiguration846</text><rect x="688" y="224" width="68" height="0.9" fill="#000"/><text x="1018.3" y="223" font-size="8.8" fill="#000" textLength="59.6" lengthAdjust="spacingAndGlyphs" stroke="#000" stroke-width="0.0">Ready To Execute</text><rect x="1018.3" y="224" width="59.6" height="0.9" fill="#000"/><text x="688" y="242" font-size="8.8" fill="#000" textLength="68" lengthAdjust="spacingAndGlyphs" stroke="#000" stroke-width="0.0">MyConfiguration845</text><rect x="688" y="243" width="68" height="0.9" fill="#000"/><text x="1018.3" y="242" font-size="8.8" fill="#000" textLength="16.5" lengthAdjust="spacingAndGlyphs" stroke="#000" stroke-width="0.0">Draft</text><text x="688" y="261" font-size="8.8" fill="#000" textLength="68" lengthAdjust="spacingAndGlyphs" stroke="#000" stroke-width="0.0">MyConfiguration843</text><rect x="688" y="262" width="68" height="0.9" fill="#000"/><text x="1018.3" y="261" font-size="8.8" fill="#000" textLength="59.6" lengthAdjust="spacingAndGlyphs" stroke="#000" stroke-width="0.0">Ready To Execute</text><rect x="1018.3" y="262" width="59.6" height="0.9" fill="#000"/><text x="688" y="280" font-size="8.8" fill="#000" textLength="68" lengthAdjust="spacingAndGlyphs" stroke="#000" stroke-width="0.0">MyConfiguration840</text><rect x="688" y="281" width="68" height="0.9" fill="#000"/><text x="1018.3" y="280" font-size="8.8" fill="#000" textLength="59.6" lengthAdjust="spacingAndGlyphs" stroke="#000" stroke-width="0.0">Ready To Execute</text><rect x="1018.3" y="281" width="59.6" height="0.9" fill="#000"/><text x="694.5" y="386" font-size="8.8" fill="#000" textLength="47.3" lengthAdjust="spacingAndGlyphs" stroke="#000" stroke-width="0.0">Total Software</text><text x="1069.5" y="386" font-size="8.8" fill="#9aaccc" stroke="#9aaccc" stroke-width="0.0">:</text><text x="1077.9" y="386" font-size="8.8" fill="#4a5a9a" textLength="15" lengthAdjust="spacingAndGlyphs" stroke="#4a5a9a" stroke-width="0.0">1597</text><text x="694.5" y="410" font-size="8.8" fill="#000" textLength="79.2" lengthAdjust="spacingAndGlyphs" stroke="#000" stroke-width="0.0">In Compliance Licenses</text><text x="1069.5" y="410" font-size="8.8" fill="#9aaccc" stroke="#9aaccc" stroke-width="0.0">:</text><text x="1077.9" y="410" font-size="8.8" fill="#4a5a9a" textLength="3.5" lengthAdjust="spacingAndGlyphs" stroke="#4a5a9a" stroke-width="0.0">1</text><text x="694.5" y="434" font-size="8.8" fill="#000" textLength="47.3" lengthAdjust="spacingAndGlyphs" stroke="#000" stroke-width="0.0">Over Licensed</text><text x="1069.5" y="434" font-size="8.8" fill="#9aaccc" stroke="#9aaccc" stroke-width="0.0">:</text><text x="1077.9" y="434" font-size="8.8" fill="#4a5a9a" textLength="4" lengthAdjust="spacingAndGlyphs" stroke="#4a5a9a" stroke-width="0.0">5</text><text x="694.5" y="458" font-size="8.8" fill="#000" textLength="52.4" lengthAdjust="spacingAndGlyphs" stroke="#000" stroke-width="0.0">Under Licensed</text><text x="1069.5" y="458" font-size="8.8" fill="#9aaccc" stroke="#9aaccc" stroke-width="0.0">:</text><text x="1077.9" y="458" font-size="8.8" fill="#4a5a9a" textLength="4" lengthAdjust="spacingAndGlyphs" stroke="#4a5a9a" stroke-width="0.0">2</text><text x="694.5" y="482" font-size="8.8" fill="#000" textLength="52.4" lengthAdjust="spacingAndGlyphs" stroke="#000" stroke-width="0.0">License Expired</text><text x="1069.5" y="482" font-size="8.8" fill="#9aaccc" stroke="#9aaccc" stroke-width="0.0">:</text><text x="1077.9" y="482" font-size="8.8" fill="#4a5a9a" textLength="4" lengthAdjust="spacingAndGlyphs" stroke="#4a5a9a" stroke-width="0.0">5</text><text x="694.5" y="506" font-size="8.8" fill="#000" textLength="64.3" lengthAdjust="spacingAndGlyphs" stroke="#000" stroke-width="0.0">Prohibited Software</text><text x="1069.5" y="506" font-size="8.8" fill="#9aaccc" stroke="#9aaccc" stroke-width="0.0">:</text><text x="1077.9" y="506" font-size="8.8" fill="#4a5a9a" textLength="7.5" lengthAdjust="spacingAndGlyphs" stroke="#4a5a9a" stroke-width="0.0">10</text><text x="364.1" y="226.4" font-size="8.8" fill="#000" textLength="59.4" lengthAdjust="spacingAndGlyphs" stroke="#000" stroke-width="0.0">Ready To Execute</text><text x="426.2" y="226.4" font-size="8.8" fill="#5f74a8" textLength="13.7" lengthAdjust="spacingAndGlyphs" stroke="#5f74a8" stroke-width="0.0">(86)</text><rect x="351.7" y="220.0" width="6" height="6" fill="#f9a50f"/><text x="364.1" y="242.3" font-size="8.8" fill="#000" textLength="39.6" lengthAdjust="spacingAndGlyphs" stroke="#000" stroke-width="0.0">In Progress</text><text x="406.40000000000003" y="242.3" font-size="8.8" fill="#5f74a8" textLength="13.2" lengthAdjust="spacingAndGlyphs" stroke="#5f74a8" stroke-width="0.0">(16)</text><rect x="351.7" y="235.9" width="6" height="6" fill="#138a1a"/><text x="364.1" y="258.2" font-size="8.8" fill="#000" textLength="29.5" lengthAdjust="spacingAndGlyphs" stroke="#000" stroke-width="0.0">Executed</text><text x="396.3" y="258.2" font-size="8.8" fill="#5f74a8" textLength="13.2" lengthAdjust="spacingAndGlyphs" stroke="#5f74a8" stroke-width="0.0">(32)</text><rect x="351.7" y="251.79999999999998" width="6" height="6" fill="#0c33c8"/><text x="364.1" y="274.1" font-size="8.8" fill="#000" textLength="36.7" lengthAdjust="spacingAndGlyphs" stroke="#000" stroke-width="0.0">Suspended</text><text x="403.5" y="274.1" font-size="8.8" fill="#5f74a8" textLength="9.6" lengthAdjust="spacingAndGlyphs" stroke="#5f74a8" stroke-width="0.0">(3)</text><rect x="351.7" y="267.70000000000005" width="6" height="6" fill="#f0343c"/><text x="364.1" y="290.0" font-size="8.8" fill="#000" textLength="16.8" lengthAdjust="spacingAndGlyphs" stroke="#000" stroke-width="0.0">Draft</text><text x="383.6" y="290.0" font-size="8.8" fill="#5f74a8" textLength="13.2" lengthAdjust="spacingAndGlyphs" stroke="#5f74a8" stroke-width="0.0">(12)</text><rect x="351.7" y="283.6" width="6" height="6" fill="#7ba0de"/><text x="364.1" y="305.9" font-size="8.8" fill="#000" textLength="59.4" lengthAdjust="spacingAndGlyphs" stroke="#000" stroke-width="0.0">Retry In Progress</text><text x="426.2" y="305.9" font-size="8.8" fill="#5f74a8" textLength="9.3" lengthAdjust="spacingAndGlyphs" stroke="#5f74a8" stroke-width="0.0">(7)</text><rect x="351.7" y="299.5" width="6" height="6" fill="#fb6a0c"/><text x="354.5" y="419.3" font-size="8.8" fill="#000" textLength="9.2" lengthAdjust="spacingAndGlyphs" stroke="#000" stroke-width="0.0">All</text><text x="366.1" y="419.3" font-size="8.8" fill="#5f74a8" textLength="13.4" lengthAdjust="spacingAndGlyphs" stroke="#5f74a8" stroke-width="0.0">(24)</text><text x="364.3" y="434.8" font-size="8.8" fill="#000" textLength="41.3" lengthAdjust="spacingAndGlyphs" stroke="#000" stroke-width="0.0">Windows XP</text><text x="408.3" y="434.8" font-size="8.8" fill="#5f74a8" textLength="9.2" lengthAdjust="spacingAndGlyphs" stroke="#5f74a8" stroke-width="0.0">(6)</text><rect x="352" y="428.40000000000003" width="6" height="6" fill="#f9a50f"/><text x="364.3" y="450.85" font-size="8.8" fill="#000" textLength="48.2" lengthAdjust="spacingAndGlyphs" stroke="#000" stroke-width="0.0">Windows Vista</text><text x="415.2" y="450.85" font-size="8.8" fill="#5f74a8" textLength="9.6" lengthAdjust="spacingAndGlyphs" stroke="#5f74a8" stroke-width="0.0">(1)</text><rect x="352" y="444.45000000000005" width="6" height="6" fill="#138a1a"/><text x="364.3" y="466.90000000000003" font-size="8.8" fill="#000" textLength="34.8" lengthAdjust="spacingAndGlyphs" stroke="#000" stroke-width="0.0">Mac OS X</text><text x="401.8" y="466.90000000000003" font-size="8.8" fill="#5f74a8" textLength="8.6" lengthAdjust="spacingAndGlyphs" stroke="#5f74a8" stroke-width="0.0">(3)</text><rect x="352" y="460.50000000000006" width="6" height="6" fill="#0c33c8"/><text x="364.3" y="482.95000000000005" font-size="8.8" fill="#000" textLength="35.7" lengthAdjust="spacingAndGlyphs" stroke="#000" stroke-width="0.0">Windows 8</text><text x="402.7" y="482.95000000000005" font-size="8.8" fill="#5f74a8" textLength="8.6" lengthAdjust="spacingAndGlyphs" stroke="#5f74a8" stroke-width="0.0">(2)</text><rect x="352" y="476.55000000000007" width="6" height="6" fill="#f0343c"/><text x="364.3" y="499.0" font-size="8.8" fill="#000" textLength="35.7" lengthAdjust="spacingAndGlyphs" stroke="#000" stroke-width="0.0">Windows 7</text><text x="402.7" y="499.0" font-size="8.8" fill="#5f74a8" textLength="8.6" lengthAdjust="spacingAndGlyphs" stroke="#5f74a8" stroke-width="0.0">(7)</text><rect x="352" y="492.6" width="6" height="6" fill="#7ba0de"/><text x="364.3" y="515.05" font-size="8.8" fill="#000" textLength="21.4" lengthAdjust="spacingAndGlyphs" stroke="#000" stroke-width="0.0">Server</text><text x="388.4" y="515.05" font-size="8.8" fill="#5f74a8" textLength="8.6" lengthAdjust="spacingAndGlyphs" stroke="#5f74a8" stroke-width="0.0">(5)</text><rect x="352" y="508.65" width="6" height="6" fill="#fb6a0c"/><text x="364.7" y="611.6" font-size="8.8" fill="#000" textLength="67.1" lengthAdjust="spacingAndGlyphs" stroke="#000" stroke-width="0.0">Health Not Available</text><text x="435.3" y="611.6" font-size="8.8" fill="#5f74a8" textLength="8.2" lengthAdjust="spacingAndGlyphs" stroke="#5f74a8" stroke-width="0.0">(8)</text><rect x="352.7" y="605.2" width="6" height="6" fill="#f9a50f"/><text x="364.7" y="627.6" font-size="8.8" fill="#000" textLength="52" lengthAdjust="spacingAndGlyphs" stroke="#000" stroke-width="0.0">Healthy Systems</text><text x="419.5" y="627.6" font-size="8.8" fill="#5f74a8" textLength="8.2" lengthAdjust="spacingAndGlyphs" stroke="#5f74a8" stroke-width="0.0">(5)</text><rect x="352.7" y="621.2" width="6" height="6" fill="#138a1a"/><text x="1014.8" y="611.8" font-size="8.8" fill="#000" textLength="55.8" lengthAdjust="spacingAndGlyphs" stroke="#000" stroke-width="0.0">Installed Patches</text><text x="1073.4" y="611.8" font-size="8.8" fill="#5f74a8" textLength="16.8" lengthAdjust="spacingAndGlyphs" stroke="#5f74a8" stroke-width="0.0">(272)</text><rect x="1002.3" y="605.4" width="6" height="6" fill="#138a1a"/><text x="1014.8" y="627.8" font-size="8.8" fill="#000" textLength="52" lengthAdjust="spacingAndGlyphs" stroke="#000" stroke-width="0.0">Missing Patches</text><text x="1069.5" y="627.8" font-size="8.8" fill="#5f74a8" textLength="16.8" lengthAdjust="spacingAndGlyphs" stroke="#5f74a8" stroke-width="0.0">(887)</text><rect x="1002.3" y="621.4" width="6" height="6" fill="#f0343c"/></svg>
<div class="abs" style="left:0;top:625px;width:1326px;height:2px;background:linear-gradient(#d2d2d2,#e4e4e4)"></div>
</body></html>
